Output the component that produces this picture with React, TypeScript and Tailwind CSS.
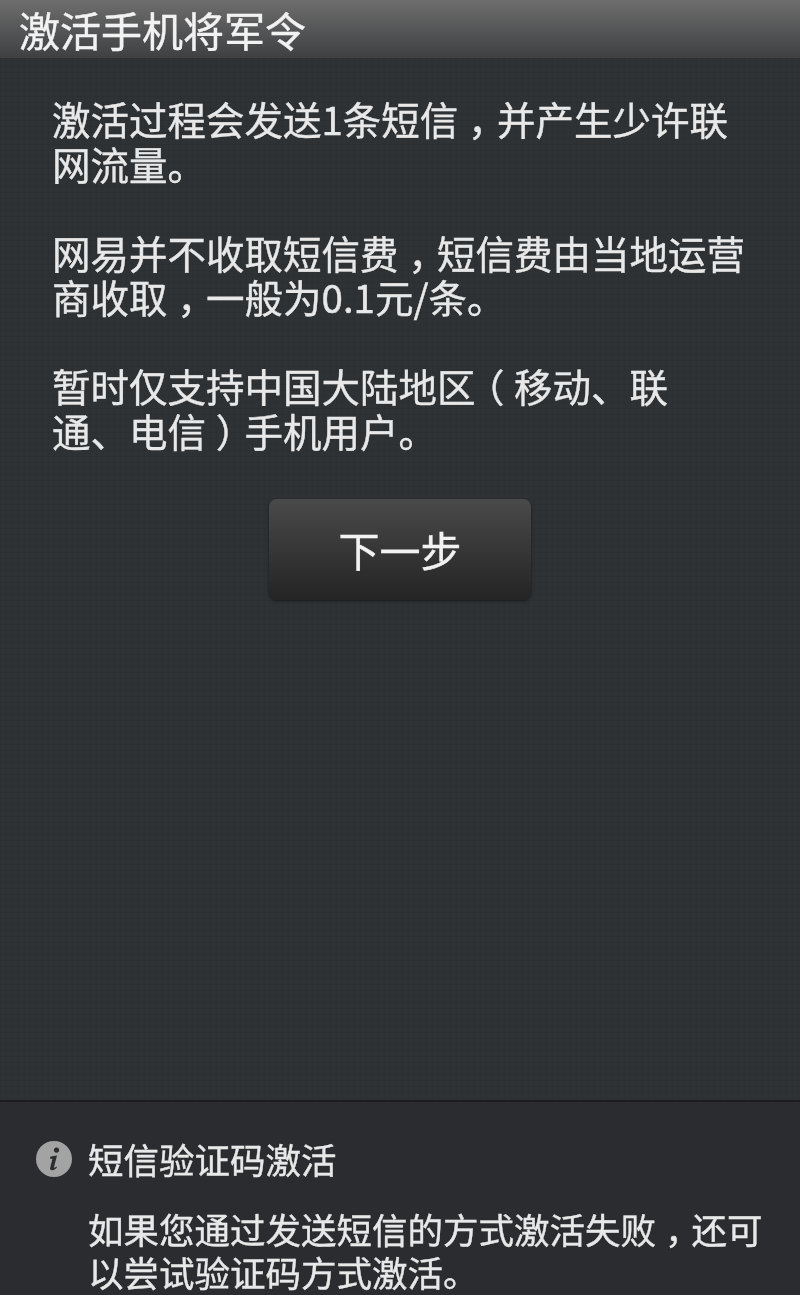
function Punct({ children }: { children: string }) {
  return <span className="inline-block w-[1em] text-center [font-feature-settings:'halt']">{children}</span>;
}

export default function App() {
  const font = "font-['Noto_Sans_CJK_SC',sans-serif]";
  return (
    <div className={`${font} w-[800px] h-[1295px] overflow-hidden flex flex-col bg-[#2e3235] bg-[linear-gradient(rgba(0,0,0,0.035)_1px,transparent_1px),linear-gradient(90deg,rgba(0,0,0,0.035)_1px,transparent_1px)] bg-[length:6px_6px] text-[#e8e8e8] [-webkit-text-stroke:0.4px_currentColor]`}>
      <div className="h-[58px] shrink-0 bg-gradient-to-b from-[#6e6e6e] to-[#3f4042] pl-[19px] flex items-center">
        <h1 className="text-[41px] leading-[58px] font-normal text-[#f2f2f2] whitespace-nowrap blur-[0.5px]">激活手机将军令</h1>
      </div>

      <div className="flex-1 flex flex-col">
        <div className="pt-[38px] pl-[52px] pr-[40px] text-[38.5px] leading-[44.5px] flex flex-col gap-[44.5px] whitespace-nowrap blur-[0.5px]">
          <p>激活过程会发送1条短信<Punct>，</Punct>并产生少许联<br />网流量。</p>
          <p>网易并不收取短信费<Punct>，</Punct>短信费由当地运营<br />商收取<Punct>，</Punct>一般为0.1元/条。</p>
          <p>暂时仅支持中国大陆地区<Punct>（</Punct>移动、联<br />通、电信<Punct>）</Punct>手机用户。</p>
        </div>
        <div className="flex justify-center mt-[47px]">
          <button className="w-[262px] h-[101px] rounded-[8px] bg-gradient-to-b from-[#4a4a4a] to-[#242424] text-[41px] text-[#f2f2f2] shadow-[0_1px_3px_rgba(0,0,0,0.5)]">
            <span className="inline-block blur-[0.5px]">下一步</span>
          </button>
        </div>
      </div>

      <div className="h-[195px] shrink-0 border-t-2 border-[#1c1d20] bg-[#2a2c30] flex flex-col">
        <div className="flex items-center pl-[36px] pt-[35px]">
          <svg width="36" height="36" viewBox="0 0 36 36" className="shrink-0 blur-[0.5px]">
            <circle cx="18" cy="18" r="18" fill="#a3a3a3" />
            <path d="M20.5 6.5a2.6 2.6 0 1 1-.01 5.2 2.6 2.6 0 0 1 .01-5.2zM14.5 15.5l6.5-1-3 11.500c-.2.8.5 1 1.100.5l1.400-1 .5.8c-1.500 2-3 3-5 3-1.600 0-2.200-1-1.800-2.500l2.200-8.800-2.500-.5z" fill="#2b2d31" />
          </svg>
          <div className="ml-[16px] text-[35.5px] leading-[44px] whitespace-nowrap blur-[0.5px]">短信验证码激活</div>
        </div>
        <p className="pl-[88px] mt-[26px] text-[35.5px] leading-[43px] whitespace-nowrap blur-[0.5px]">如果您通过发送短信的方式激活失败<Punct>，</Punct>还可<br />以尝试验证码方式激活。</p>
      </div>
    </div>
  );
}
